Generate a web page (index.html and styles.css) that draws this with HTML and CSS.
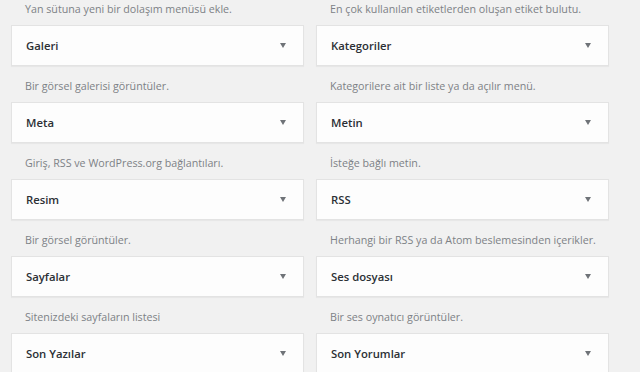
FILE: index.html
```html
<!DOCTYPE html>
<html lang="tr">
<head>
<meta charset="utf-8">
<title>Widget'lar</title>
<link rel="stylesheet" href="styles.css">
</head>
<body>
<div class="widgets">
  <div class="col">
    <p class="desc">Yan sütuna yeni bir dolaşım menüsü ekle.</p>
    <div class="widget"><span class="title">Galeri</span><span class="arrow"></span></div>
    <p class="desc">Bir görsel galerisi görüntüler.</p>
    <div class="widget"><span class="title">Meta</span><span class="arrow"></span></div>
    <p class="desc">Giriş, RSS ve WordPress.org bağlantıları.</p>
    <div class="widget"><span class="title">Resim</span><span class="arrow"></span></div>
    <p class="desc">Bir görsel görüntüler.</p>
    <div class="widget"><span class="title">Sayfalar</span><span class="arrow"></span></div>
    <p class="desc">Sitenizdeki sayfaların listesi</p>
    <div class="widget"><span class="title">Son Yazılar</span><span class="arrow"></span></div>
  </div>
  <div class="col">
    <p class="desc">En çok kullanılan etiketlerden oluşan etiket bulutu.</p>
    <div class="widget"><span class="title">Kategoriler</span><span class="arrow"></span></div>
    <p class="desc">Kategorilere ait bir liste ya da açılır menü.</p>
    <div class="widget"><span class="title">Metin</span><span class="arrow"></span></div>
    <p class="desc">İsteğe bağlı metin.</p>
    <div class="widget"><span class="title">RSS</span><span class="arrow"></span></div>
    <p class="desc">Herhangi bir RSS ya da Atom beslemesinden içerikler.</p>
    <div class="widget"><span class="title">Ses dosyası</span><span class="arrow"></span></div>
    <p class="desc">Bir ses oynatıcı görüntüler.</p>
    <div class="widget"><span class="title">Son Yorumlar</span><span class="arrow"></span></div>
  </div>
</div>
</body>
</html>
```
FILE: styles.css
```css
html, body {
  margin: 0;
  padding: 0;
  background: #f1f1f1;
  overflow: hidden;
}
body {
  font-family: "Open Sans", "Noto Sans", sans-serif;
  width: 640px;
  height: 372px;
}
.widgets {
  display: grid;
  grid-template-columns: 293px 293px;
  column-gap: 12px;
  padding-left: 11px;
}
.col {
  display: flex;
  flex-direction: column;
}
.desc {
  margin: 11px 0 7px 14px;
  font-size: 10.7px;
  line-height: 18px;
  color: #7d8186;
  white-space: nowrap;
}
.col .desc:first-child {
  margin-top: 0;
}
.widget {
  box-sizing: border-box;
  height: 41px;
  display: flex;
  align-items: center;
  justify-content: space-between;
  padding: 0 17px 0 14px;
  background: #fdfdfd;
  border: 1px solid #e3e3e3;
  box-shadow: 0 1px 1px rgba(0, 0, 0, 0.04);
}
.title {
  font-size: 11.3px;
  font-weight: 600;
  color: #2c3035;
}
.arrow {
  width: 0;
  height: 0;
  border-left: 3.5px solid transparent;
  border-right: 3.5px solid transparent;
  border-top: 5px solid #6f7378;
}
```
